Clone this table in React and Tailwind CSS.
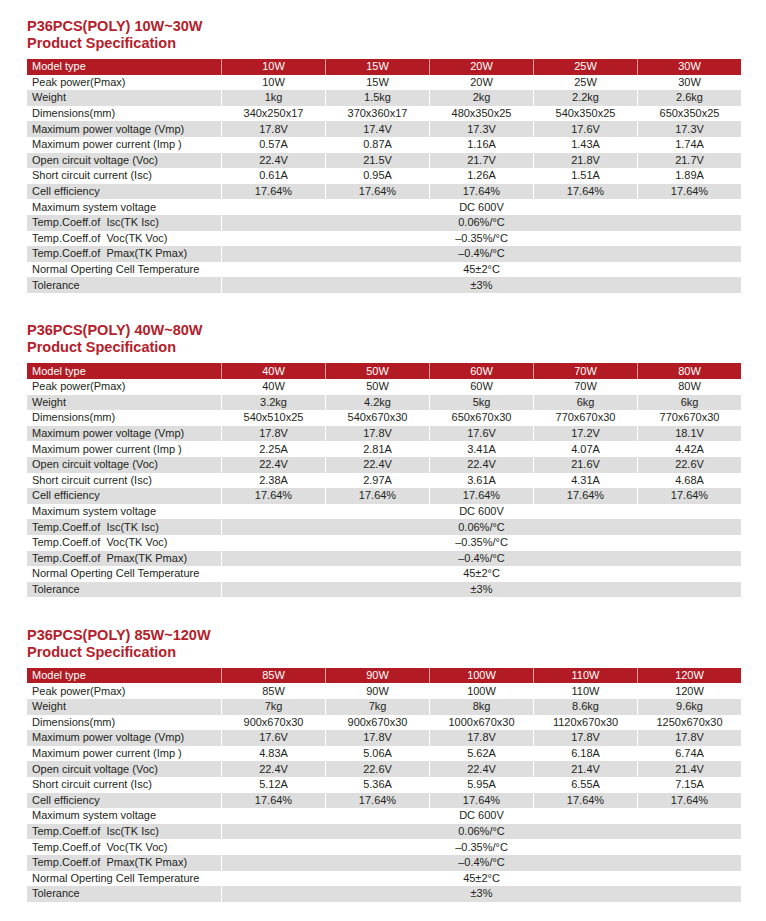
import React from "react";

const labels = [
  "Peak power(Pmax)",
  "Weight",
  "Dimensions(mm)",
  "Maximum power voltage (Vmp)",
  "Maximum power current (Imp )",
  "Open circuit voltage (Voc)",
  "Short circuit current (Isc)",
  "Cell efficiency",
];

const merged = [
  ["Maximum system voltage", "DC 600V"],
  ["Temp.Coeff.of  Isc(TK Isc)", "0.06%/°C"],
  ["Temp.Coeff.of  Voc(TK Voc)", "–0.35%/°C"],
  ["Temp.Coeff.of  Pmax(TK Pmax)", "–0.4%/°C"],
  ["Normal Operting Cell Temperature", "45±2°C"],
  ["Tolerance", "±3%"],
];

const eff = ["17.64%", "17.64%", "17.64%", "17.64%", "17.64%"];

const sections = [
  {
    title: "P36PCS(POLY) 10W~30W",
    models: ["10W", "15W", "20W", "25W", "30W"],
    rows: [
      ["10W", "15W", "20W", "25W", "30W"],
      ["1kg", "1.5kg", "2kg", "2.2kg", "2.6kg"],
      ["340x250x17", "370x360x17", "480x350x25", "540x350x25", "650x350x25"],
      ["17.8V", "17.4V", "17.3V", "17.6V", "17.3V"],
      ["0.57A", "0.87A", "1.16A", "1.43A", "1.74A"],
      ["22.4V", "21.5V", "21.7V", "21.8V", "21.7V"],
      ["0.61A", "0.95A", "1.26A", "1.51A", "1.89A"],
      eff,
    ],
  },
  {
    title: "P36PCS(POLY) 40W~80W",
    models: ["40W", "50W", "60W", "70W", "80W"],
    rows: [
      ["40W", "50W", "60W", "70W", "80W"],
      ["3.2kg", "4.2kg", "5kg", "6kg", "6kg"],
      ["540x510x25", "540x670x30", "650x670x30", "770x670x30", "770x670x30"],
      ["17.8V", "17.8V", "17.6V", "17.2V", "18.1V"],
      ["2.25A", "2.81A", "3.41A", "4.07A", "4.42A"],
      ["22.4V", "22.4V", "22.4V", "21.6V", "22.6V"],
      ["2.38A", "2.97A", "3.61A", "4.31A", "4.68A"],
      eff,
    ],
  },
  {
    title: "P36PCS(POLY) 85W~120W",
    models: ["85W", "90W", "100W", "110W", "120W"],
    rows: [
      ["85W", "90W", "100W", "110W", "120W"],
      ["7kg", "7kg", "8kg", "8.6kg", "9.6kg"],
      ["900x670x30", "900x670x30", "1000x670x30", "1120x670x30", "1250x670x30"],
      ["17.6V", "17.8V", "17.8V", "17.8V", "17.8V"],
      ["4.83A", "5.06A", "5.62A", "6.18A", "6.74A"],
      ["22.4V", "22.6V", "22.4V", "21.4V", "21.4V"],
      ["5.12A", "5.36A", "5.95A", "6.55A", "7.15A"],
      eff,
    ],
  },
];

function Row({ children }) {
  return (
    <div className="grid grid-cols-[194px_repeat(5,103px)] gap-x-px h-[15.6px] bg-white">
      {children}
    </div>
  );
}

function Cell({ gray, left, span, children }) {
  const bg = gray ? "bg-[#dedede]" : "bg-white";
  return (
    <div
      className={`${bg} ${span ? "col-span-5" : ""} ${
        left ? "pl-[5px] justify-start" : "justify-center"
      } flex items-center whitespace-pre leading-none`}
    >
      {children}
    </div>
  );
}

function Section({ s }) {
  return (
    <div>
      <div className="text-[#b5202a] font-bold text-[14.5px] leading-[17px] pt-[1px]">
        <div>{s.title}</div>
        <div>Product Specification</div>
      </div>
      <div className="mt-[7px] w-[714px] text-[11px] text-[#231f20]">
        <div className="grid grid-cols-[194px_repeat(5,103px)] gap-x-px h-[15.6px] bg-[#e9a0a3]">
          <div className="bg-[#b31b24] text-white pl-[5px] flex items-center leading-none">
            Model type
          </div>
          {s.models.map((m) => (
            <div
              key={m}
              className="bg-[#b31b24] text-white flex items-center justify-center leading-none"
            >
              {m}
            </div>
          ))}
        </div>
        {s.rows.map((r, i) => {
          const gray = i % 2 === 1;
          return (
            <Row key={i}>
              <Cell gray={gray} left>
                {labels[i]}
              </Cell>
              {r.map((v, j) => (
                <Cell key={j} gray={gray}>
                  {v}
                </Cell>
              ))}
            </Row>
          );
        })}
        {merged.map(([l, v], i) => {
          const gray = i % 2 === 1;
          return (
            <Row key={"m" + i}>
              <Cell gray={gray} left>
                {l}
              </Cell>
              <Cell gray={gray} span>
                {v}
              </Cell>
            </Row>
          );
        })}
      </div>
    </div>
  );
}

export default function App() {
  return (
    <div
      className="w-[766px] h-[921px] bg-white pl-[27px] pt-[17px] flex flex-col gap-[28.5px] overflow-hidden"
      style={{ fontFamily: '"Liberation Sans", Arial, sans-serif' }}
    >
      {sections.map((s) => (
        <Section key={s.title} s={s} />
      ))}
    </div>
  );
}
